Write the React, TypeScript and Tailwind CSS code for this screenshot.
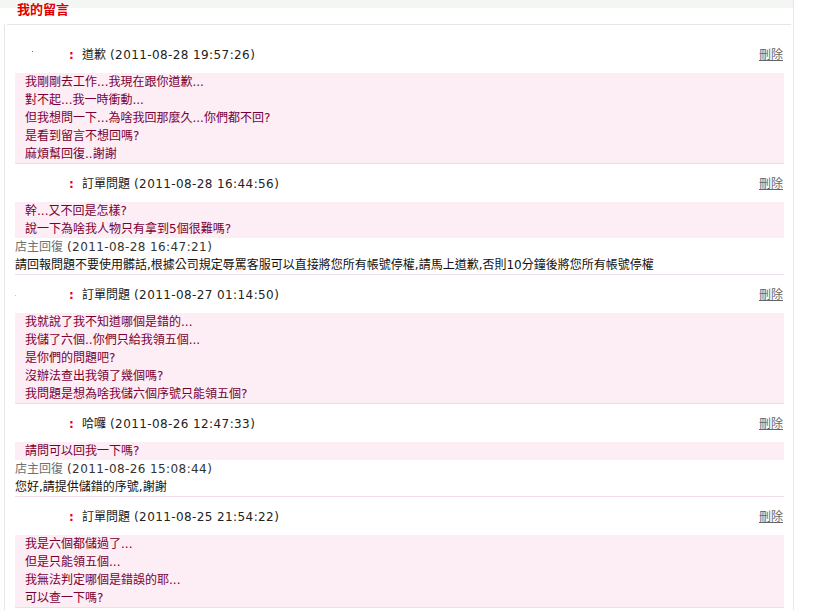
import React from "react";

type Entry = {
  title: string;
  date: string;
  lines: string[];
  reply?: { date: string; text: string };
  dot?: string;
};

const entries: Entry[] = [
  {
    title: "道歉",
    date: "(2011-08-28 19:57:26)",
    lines: [
      "我剛剛去工作...我現在跟你道歉...",
      "對不起...我一時衝動...",
      "但我想問一下...為啥我回那麼久...你們都不回?",
      "是看到留言不想回嗎?",
      "麻煩幫回復..謝謝",
    ],
    dot: "red",
  },
  {
    title: "訂單問題",
    date: "(2011-08-28 16:44:56)",
    lines: ["幹...又不回是怎樣?", "說一下為啥我人物只有拿到5個很難嗎?"],
    reply: {
      date: "(2011-08-28 16:47:21)",
      text: "請回報問題不要使用髒話,根據公司規定辱罵客服可以直接將您所有帳號停權,請馬上道歉,否則10分鐘後將您所有帳號停權",
    },
  },
  {
    title: "訂單問題",
    date: "(2011-08-27 01:14:50)",
    lines: [
      "我就說了我不知道哪個是錯的...",
      "我儲了六個..你們只給我領五個...",
      "是你們的問題吧?",
      "沒辦法查出我領了幾個嗎?",
      "我問題是想為啥我儲六個序號只能領五個?",
    ],
    dot: "yellow",
  },
  {
    title: "哈囉",
    date: "(2011-08-26 12:47:33)",
    lines: ["請問可以回我一下嗎?"],
    reply: { date: "(2011-08-26 15:08:44)", text: "您好,請提供儲錯的序號,謝謝" },
  },
  {
    title: "訂單問題",
    date: "(2011-08-25 21:54:22)",
    lines: ["我是六個都儲過了...", "但是只能領五個...", "我無法判定哪個是錯誤的耶...", "可以查一下嗎?"],
  },
];

function EntryBlock({ e }: { e: Entry }) {
  return (
    <div className="border-b border-[#f0dcea]">
      <div className="flex items-center h-[38px] pt-[11px] pb-[9px] leading-[18px]">
        <div className="w-[54px] h-[18px] relative shrink-0">
          {e.dot === "red" && (
            <span className="absolute left-[17px] top-[5px] w-[1px] h-[1px] bg-[#ff3030]" />
          )}
          {e.dot === "yellow" && (
            <span className="absolute left-0 top-[9px] w-[1px] h-[1px] bg-[#f5c060]" />
          )}
        </div>
        <span className="text-[#e8002a] font-bold w-[13px] shrink-0">:</span>
        <span className="text-[#222]">{e.title}</span>
        <span className="text-[#222] ml-[4px] tracking-[0.4px]">{e.date}</span>
        <span className="ml-auto mr-[1px] text-[#666] underline">刪除</span>
      </div>
      <div className="bg-[#fdedf5] px-[10px] text-[#7a0033] leading-[18px]">
        {e.lines.map((l, i) => (
          <div key={i}>{l}</div>
        ))}
      </div>
      {e.reply && (
        <div className="leading-[18px]">
          <div>
            <span className="text-[#707070]">店主回復</span>
            <span className="text-[#333] ml-[4px] tracking-[0.4px]">{e.reply.date}</span>
          </div>
          <div className="text-[#111]">{e.reply.text}</div>
        </div>
      )}
    </div>
  );
}

export default function App() {
  return (
    <div
      className="w-[821px] min-h-[611px] bg-white text-[12px]"
      style={{ fontFamily: '"DejaVu Sans", "Noto Sans CJK TC", sans-serif' }}
    >
      <div className="w-[794px] min-h-[611px] relative">
        <div className="h-[25px] bg-[linear-gradient(#f4f6f4_0,#f4f6f4_8px,#ffffff_8px)] border-r border-[#e6e6e6]">
          <div className="pl-[17px] pt-[2px] leading-[16px] text-[13px] font-bold text-[#dd0000]">
            我的留言
          </div>
        </div>
        <div className="ml-[4px] border-l border-r border-[#e6e6e6] min-h-[586px]">
          <div className="mx-[2px] border-t border-[#e6e6e6] -mt-[1px]" />
          <div className="pt-[10px] pl-[10px] pr-[9px]">
            {entries.map((e, i) => (
              <EntryBlock key={i} e={e} />
            ))}
          </div>
        </div>
      </div>
    </div>
  );
}
